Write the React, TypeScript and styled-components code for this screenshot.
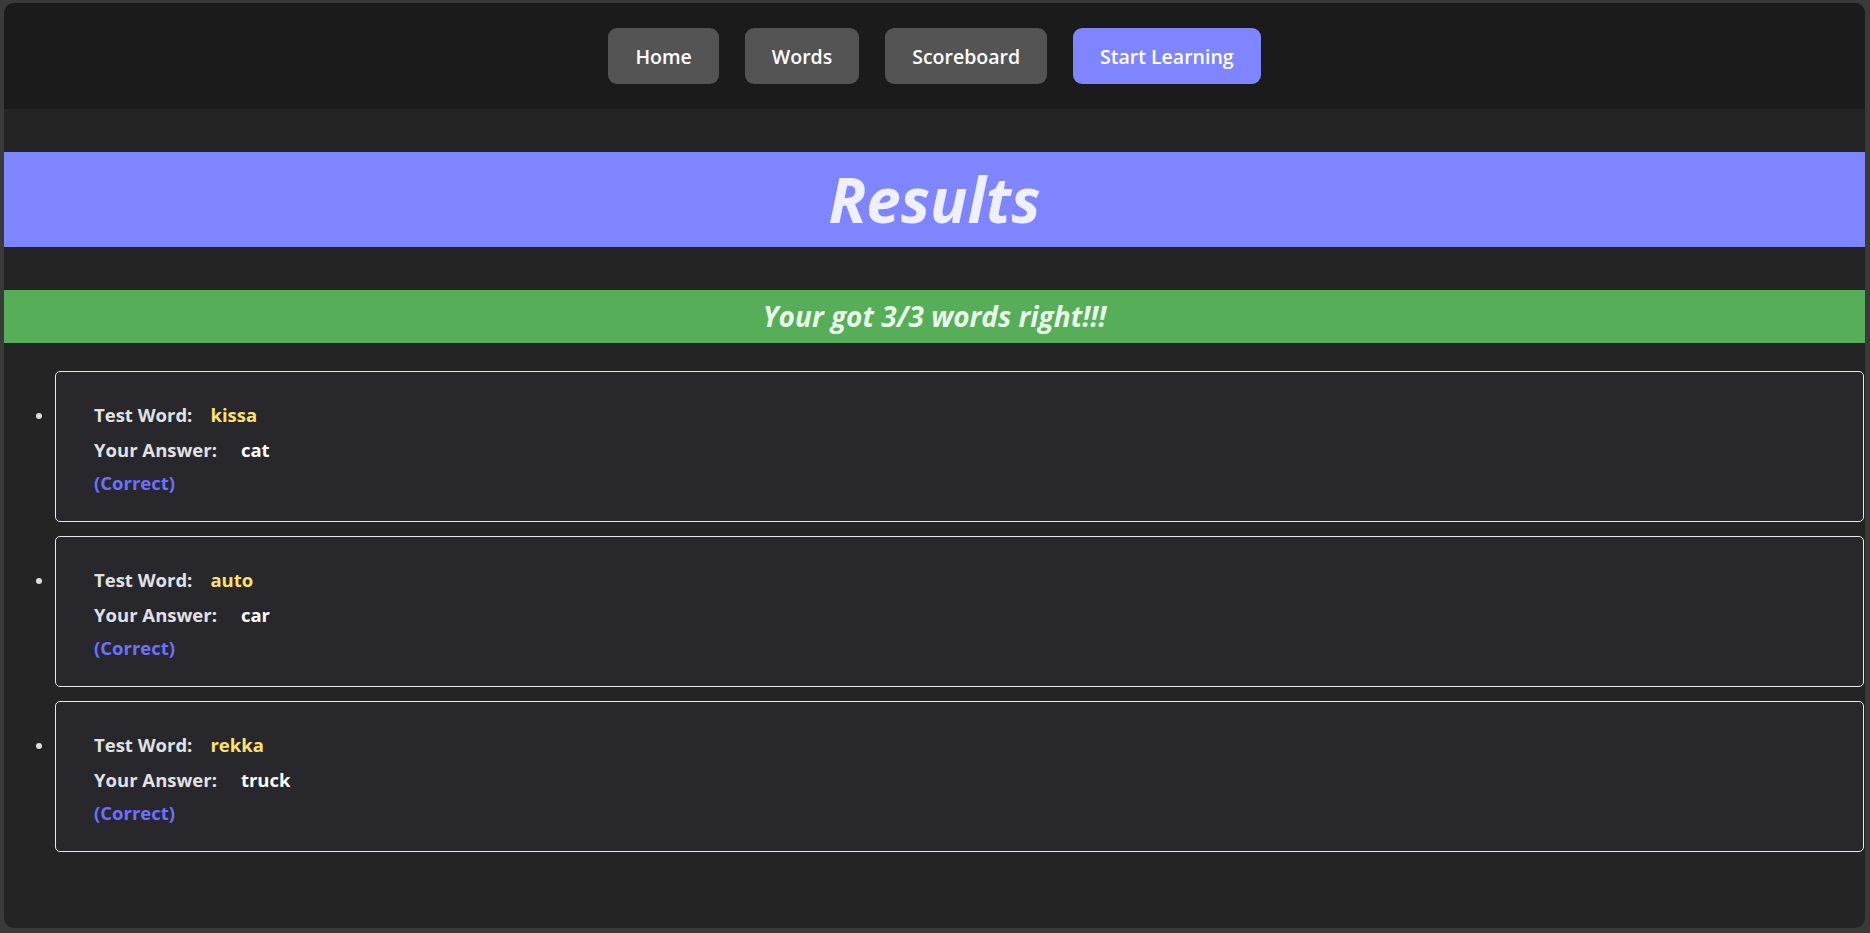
import React from "react";
import styled, { createGlobalStyle } from "styled-components";

const GlobalStyle = createGlobalStyle`
  html, body {
    margin: 0;
    padding: 0;
    background: #3a3a3a;
  }
  body {
    font-family: "Open Sans", "Noto Sans", "Liberation Sans", sans-serif;
    color: #e4e4e7;
  }
  * { box-sizing: border-box; }
`;

const Window = styled.div`
  margin: 3px 5px 5px 4px;
  height: 925px;
  border-radius: 10px;
  background: #242424;
  overflow: hidden;
`;

const NavBar = styled.nav`
  height: 106px;
  background: #1b1b1b;
  display: flex;
  align-items: center;
  justify-content: center;
  gap: 26px;
`;

const NavButton = styled.button<{ $active?: boolean }>`
  height: 56px;
  padding: 0 27px;
  border: none;
  border-radius: 9px;
  background: ${(p) => (p.$active ? "#7f85ff" : "#545454")};
  color: #ffffff;
  font-family: inherit;
  font-size: 19.5px;
  font-weight: 600;
  cursor: pointer;
`;

const Main = styled.main`
  padding-top: 43px;
`;

const Banner = styled.h1<{ $bg: string; $height: number; $size: number; $color: string }>`
  margin: 0;
  height: ${(p) => p.$height}px;
  line-height: ${(p) => p.$height}px;
  background: ${(p) => p.$bg};
  color: ${(p) => p.$color};
  font-size: ${(p) => p.$size}px;
  font-weight: 700;
  font-style: italic;
  text-align: center;
`;

const Spacer = styled.div<{ $h: number }>`
  height: ${(p) => p.$h}px;
`;

const List = styled.ul`
  margin: 28px 1px 0 11px;
  padding: 0 0 0 40px;
  color: #dddddd;
  font-size: 17.5px;
`;

const Item = styled.li`
  margin-bottom: 14px;
`;

const Card = styled.div`
  background: #27272c;
  border: 1px solid #e8e8e8;
  border-radius: 5px;
  padding: 31px 38px 26px;
`;

const Row = styled.div<{ $mt?: number }>`
  line-height: 24px;
  margin-top: ${(p) => p.$mt ?? 0}px;
  font-weight: 700;
  font-size: 18.5px;
  white-space: nowrap;
`;

const Label = styled.span`
  color: #e1e1e4;
`;

const Value = styled.span<{ $color: string; $gap: number }>`
  color: ${(p) => p.$color};
  margin-left: ${(p) => p.$gap}px;
`;

const Status = styled(Row)`
  color: #6c70ff;
`;

const results = [
  { word: "kissa", answer: "cat" },
  { word: "auto", answer: "car" },
  { word: "rekka", answer: "truck" },
];

export default function App() {
  return (
    <>
      <GlobalStyle />
      <Window>
        <NavBar>
          <NavButton>Home</NavButton>
          <NavButton>Words</NavButton>
          <NavButton>Scoreboard</NavButton>
          <NavButton $active>Start Learning</NavButton>
        </NavBar>
        <Main>
          <Banner $bg="#7f85ff" $height={95} $size={62} $color="#eef0ff">
            Results
          </Banner>
          <Spacer $h={43} />
          <Banner $bg="#56ae58" $height={53} $size={28} $color="#e9f6ea">
            Your got 3/3 words right!!!
          </Banner>
          <List>
            {results.map((r) => (
              <Item key={r.word}>
                <Card>
                  <Row>
                    <Label>Test Word:</Label>
                    <Value $color="#fde26a" $gap={18}>{r.word}</Value>
                  </Row>
                  <Row $mt={11}>
                    <Label>Your Answer:</Label>
                    <Value $color="#ffffff" $gap={24}>{r.answer}</Value>
                  </Row>
                  <Status $mt={9}>(Correct)</Status>
                </Card>
              </Item>
            ))}
          </List>
        </Main>
      </Window>
    </>
  );
}
